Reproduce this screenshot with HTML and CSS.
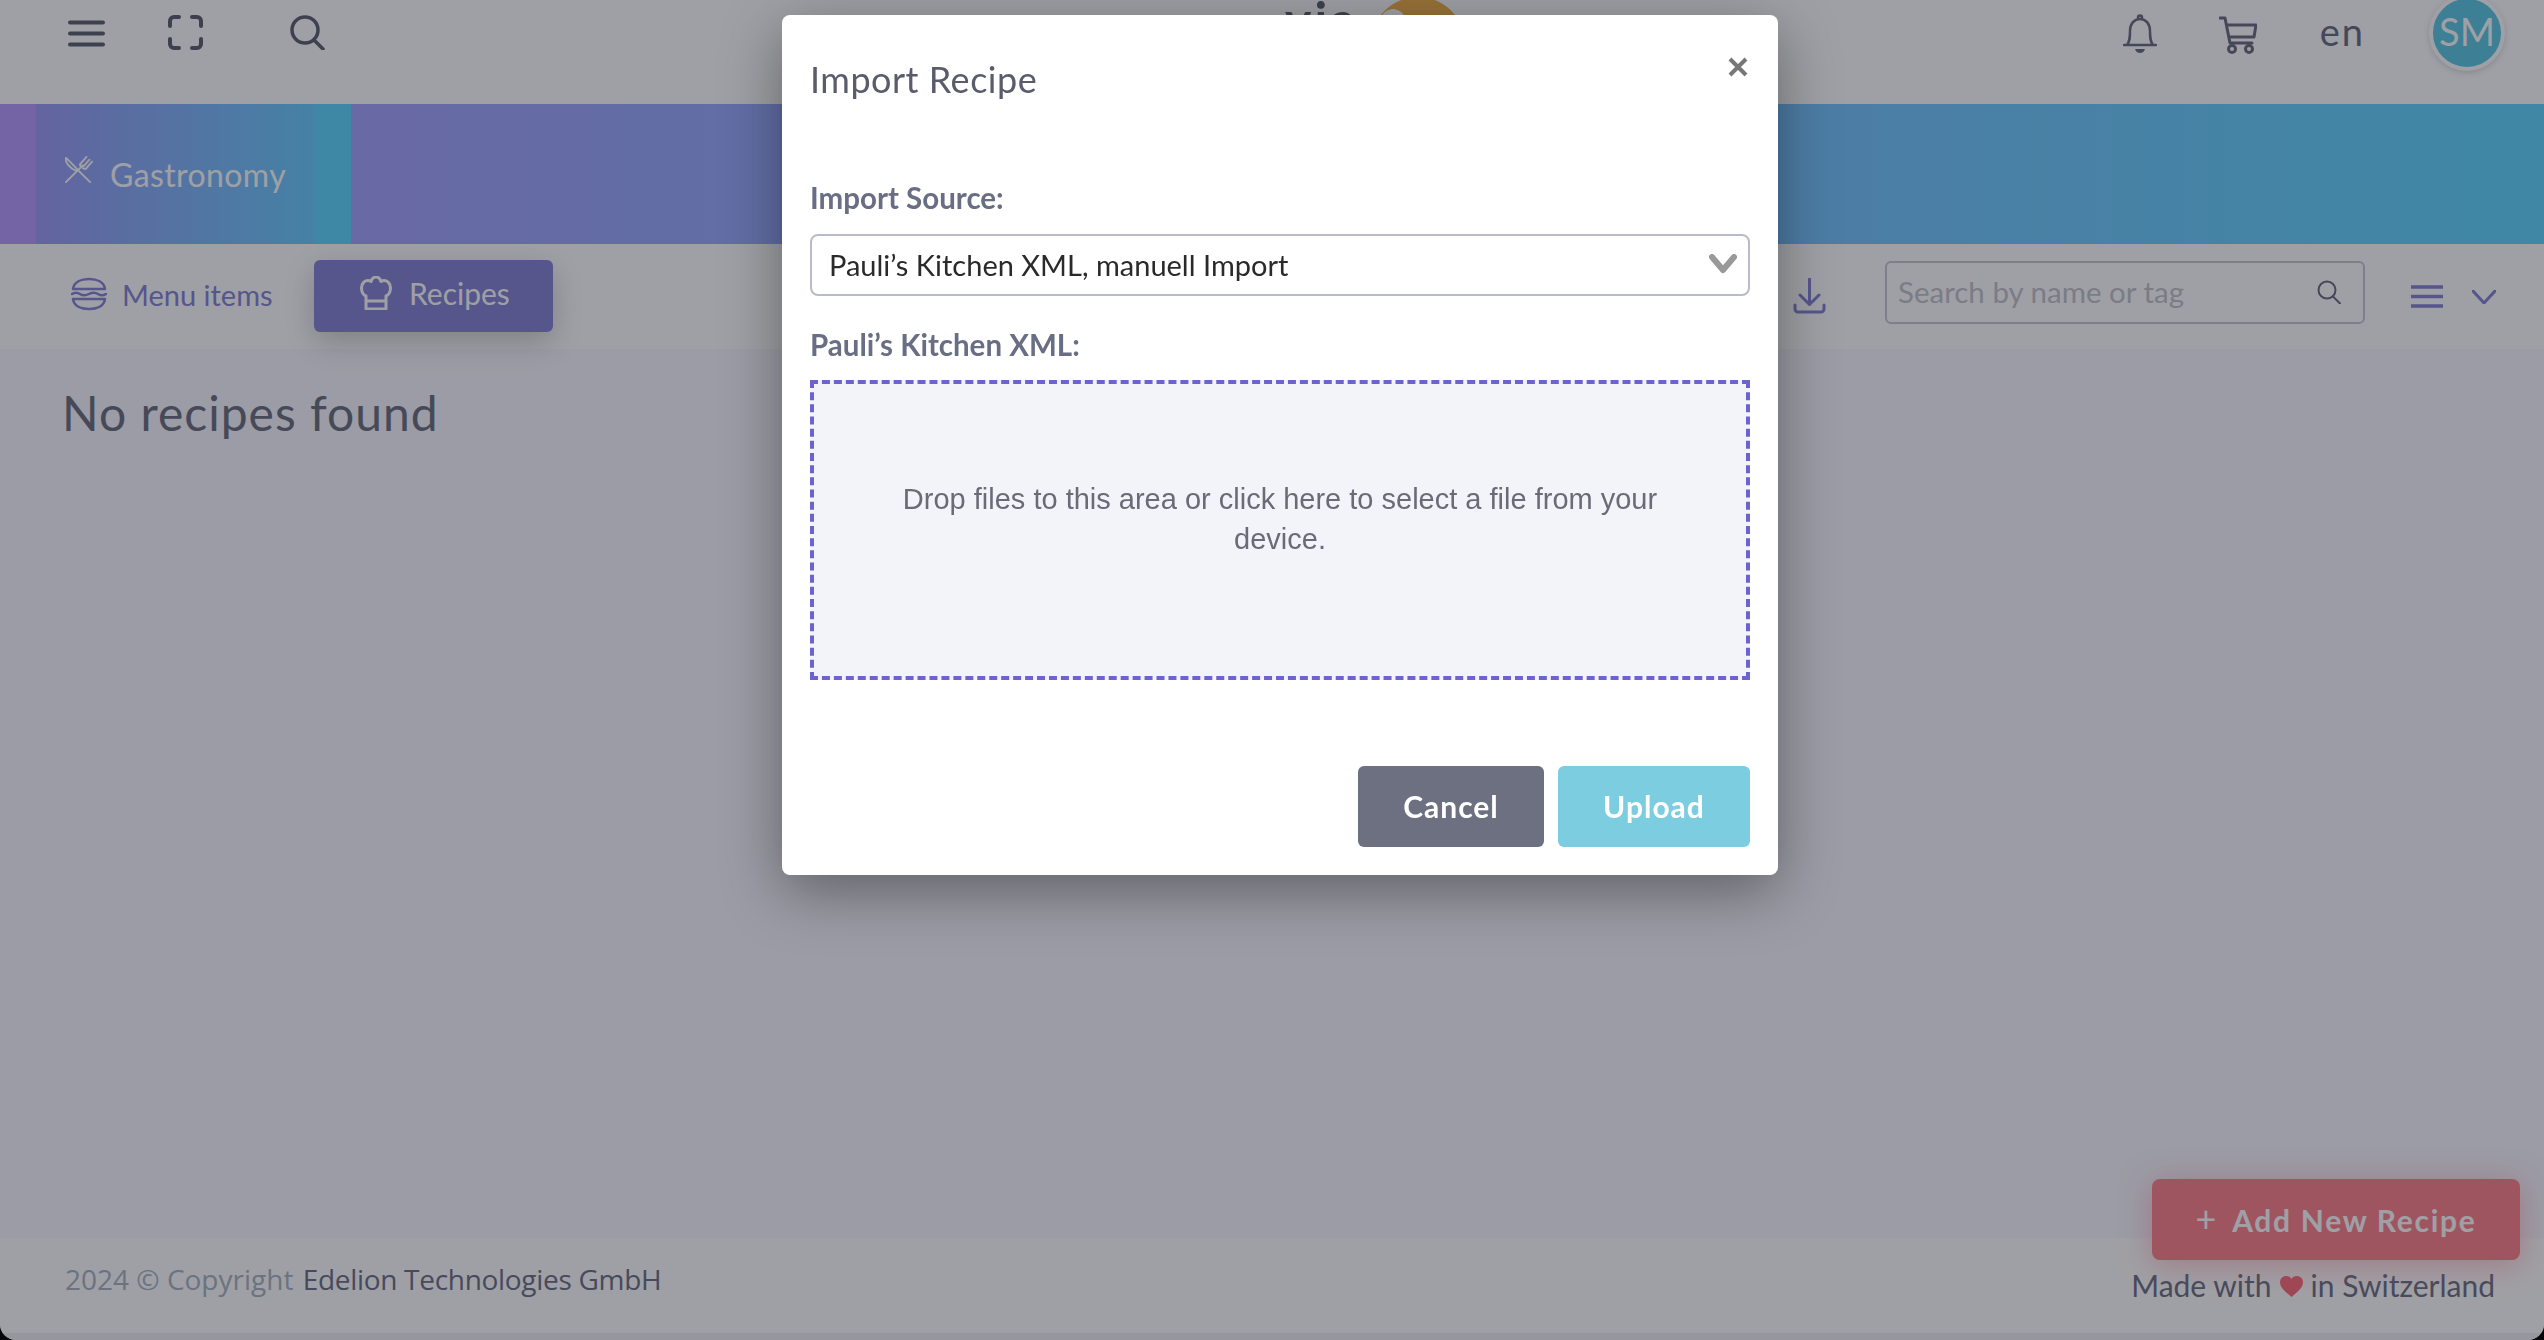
FILE: index.html
```html
<!DOCTYPE html>
<html lang="en">
<head>
  <meta charset="UTF-8">
  <title>Recipes</title>
  <link rel="stylesheet" href="styles.css">
</head>
<body>
  <div class="app">
    <header class="topbar">
      <div class="topbar-left">
        <svg class="icon-menu" viewBox="0 0 37 27"><path d="M2 2.500h33M2 13.500h33M2 24.500h33"/></svg>
        <svg class="icon-full" viewBox="0 0 35 35"><path d="M11 2H6a4 4 0 0 0-4 4v5M24 2h5a4 4 0 0 1 4 4v5M11 33H6a4 4 0 0 1-4-4v-5M24 33h5a4 4 0 0 0 4-4v-5"/></svg>
        <svg class="icon-search" viewBox="0 0 35 35"><circle cx="15" cy="15" r="13"/><path d="M24 25l9 9"/></svg>
      </div>
      <div class="logo">
        <span class="logo-text">via</span>
        <span class="logo-dot"></span>
      </div>
      <div class="topbar-right">
        <svg class="icon-bell" viewBox="0 0 34 40"><path d="M1 31h32M4 31c3-4 3-8 3-14 0-7 4-12 10-12s10 5 10 12c0 6 0 10 3 14M15 3.500a2 2 0 0 1 4 0"/><path class="solid" d="M12 35h10c-1 3-3 4-5 4s-4-1-5-4z"/></svg>
        <svg class="icon-cart" viewBox="0 0 38 38"><path d="M1 2h5l5 25h22M8 9h29l-2 12H10"/><circle cx="13" cy="33" r="3.500"/><circle cx="30" cy="33" r="3.500"/></svg>
        <span class="lang">en</span>
        <div class="avatar">SM</div>
      </div>
    </header>

    <div class="banner">
      <div class="banner-tab">
        <div class="banner-tab-inner">
          <svg class="icon-cutlery" viewBox="0 0 30 30"><path d="M1 2c5 4 11 12 26 26M1 2c-1 5 4 11 11 14M1 28L19 10M17 12l-1-3 7-8M19 13l3 1 7-8M20 11l6-7"/></svg>
          <span>Gastronomy</span>
        </div>
      </div>
    </div>

    <nav class="subnav">
      <div class="tabs">
        <a class="tab">
          <svg class="icon-burger" viewBox="0 0 36 34"><path d="M2 12C3 5 10 2 18 2s15 3 16 10zM2 22h32c-1 7-8 10-16 10S3 29 2 22zM1 17c3-2 5-2 8 0s5 2 9 0 6-2 9 0 5 2 8 0"/></svg>
          Menu items
        </a>
        <a class="tab tab-active">
          <svg class="icon-hat" viewBox="0 0 32 34"><path d="M6 33V20C3 19 1.500 15 1.500 12 1.500 7 5 4.500 8 4.500c1 0 2 .5 3 1 1-3 3-4.500 5-4.500s4 1.500 5 4.500c1-.5 2-1 3-1 3 0 6.500 2.500 6.500 7.500 0 3-1.500 7-4.500 8v13zM6 25h20"/></svg>
          Recipes
        </a>
      </div>
      <div class="tools">
        <svg class="icon-download" viewBox="0 0 33 36"><path d="M16.500 1v25M7 17l9.500 9.500L26 17M2 27v4a3 3 0 0 0 3 3h23a3 3 0 0 0 3-3v-4"/></svg>
        <div class="search">
          <input class="search-input" type="text" placeholder="Search by name or tag">
          <svg class="icon-search-small" viewBox="0 0 24 24"><circle cx="10" cy="10" r="8.500"/><path d="M16 16.500l7 7"/></svg>
        </div>
        <svg class="icon-list" viewBox="0 0 32 23"><path d="M0 2h32M0 11.500h32M0 21h32"/></svg>
        <svg class="icon-chevron" viewBox="0 0 24 14"><path d="M1 1l11 12L23 1"/></svg>
      </div>
    </nav>

    <main class="content">
      <h1 class="empty-title">No recipes found</h1>
    </main>

    <footer class="footer">
      <p class="copyright">2024 © Copyright <span class="company">Edelion Technologies GmbH</span></p>
      <p class="made-with">Made with <svg class="heart" viewBox="0 0 24 22"><path d="M12 22C5 16 0 12 0 6.500 0 2.500 3 0 6.500 0 9 0 11 1.200 12 3.200 13 1.200 15 0 17.500 0 21 0 24 2.500 24 6.500 24 12 19 16 12 22z"/></svg> in Switzerland</p>
    </footer>
    <div class="footer-strip"></div>

    <button class="add-button"><span class="add-plus">+</span>Add New Recipe</button>
  </div>

  <div class="backdrop">
    <div class="modal">
      <div class="modal-header">
        <h2 class="modal-title">Import Recipe</h2>
        <svg class="icon-close" viewBox="0 0 20 20"><path d="M2 2l16 16M18 2L2 18"/></svg>
      </div>
      <label class="field-label">Import Source:</label>
      <div class="select">
        <span>Pauli’s Kitchen XML, manuell Import</span>
        <svg class="icon-select" viewBox="0 0 28 20"><path d="M3 3l11 13L25 3"/></svg>
      </div>
      <label class="field-label">Pauli’s Kitchen XML:</label>
      <div class="dropzone">
        <p>Drop files to this area or click here to select a file from your device.</p>
      </div>
      <div class="modal-footer">
        <button class="btn btn-cancel">Cancel</button>
        <button class="btn btn-upload">Upload</button>
      </div>
    </div>
  </div>
</body>
</html>
```

FILE: styles.css
```css
* {
  box-sizing: border-box;
}
html, body {
  margin: 0;
  height: 100%;
  overflow: hidden;
}
body {
  background: #000;
  font-family: 'Lato', 'Liberation Sans', sans-serif;
  color: #5a5c6c;
}
svg {
  fill: none;
  stroke: currentColor;
  stroke-linecap: round;
  stroke-linejoin: round;
  flex: none;
}
.app {
  height: 1340px;
  display: flex;
  flex-direction: column;
  background: #f9f8ff;
  border-radius: 0 0 16px 16px;
  overflow: hidden;
  color: #6a6d80;
}
.backdrop {
  position: fixed;
  inset: 0;
  background: rgba(16, 18, 30, 0.4);
  padding: 15px 0 0 782px;
}

/* top bar */
.topbar {
  height: 104px;
  background: #fff;
  display: flex;
  padding: 0 39px 0 68px;
  flex: none;
  position: relative;
}
.topbar-left {
  display: flex;
  align-items: flex-start;
  padding-top: 15px;
  color: #5d606f;
}
.icon-menu {
  width: 37px;
  height: 27px;
  margin-top: 5px;
  stroke-width: 4;
}
.icon-full {
  width: 35px;
  height: 35px;
  margin-left: 63px;
  stroke-width: 4;
}
.icon-search {
  width: 35px;
  height: 35px;
  margin-left: 87px;
  stroke-width: 3.500;
}
.logo {
  display: flex;
  margin-left: 960px;
  height: 15px;
  overflow: hidden;
}
.logo-text {
  font-size: 50px;
  font-weight: 700;
  line-height: 40px;
  margin-top: -1px;
  width: 86px;
  letter-spacing: 3px;
  color: #5d606f;
}
.logo-dot {
  width: 94px;
  height: 94px;
  border-radius: 50%;
  background: radial-gradient(circle 13px at 22px 25px, #fff 97%, transparent), #f2b24a;
  margin-top: -3px;
}
.topbar-right {
  margin-left: auto;
  display: flex;
  align-items: flex-start;
  color: #6a6d80;
}
.icon-bell {
  width: 34px;
  height: 40px;
  margin: 14px 3px 0 0;
  stroke-width: 2.500;
}
.icon-bell .solid {
  fill: currentColor;
  stroke: none;
}
.icon-cart {
  width: 38px;
  height: 38px;
  margin: 16px 1px 0 59px;
  stroke-width: 3;
}
.lang {
  font-size: 38px;
  line-height: 40px;
  margin: 11px 0 0 62px;
  letter-spacing: 2px;
}
.avatar {
  width: 76px;
  height: 76px;
  margin: -5px 0 0 64px;
  padding-bottom: 4px;
  border-radius: 50%;
  border: 4px solid #fff;
  background: #5dc8e4;
  color: #fff;
  font-size: 38px;
  display: flex;
  align-items: center;
  justify-content: center;
  box-shadow: 0 2px 6px rgba(0, 0, 0, 0.15);
}

/* banner */
.banner {
  height: 140px;
  flex: none;
  background: linear-gradient(90deg, #b09bff, #60d7ff);
}
.banner-tab {
  width: 351px;
  height: 100%;
  padding: 0 36px;
  background: linear-gradient(90deg, #b79bff 50%, #60d7ff 50%);
}
.banner-tab-inner {
  height: 100%;
  display: flex;
  align-items: center;
  gap: 17px;
  padding: 0 0 0 29px;
  color: #fff;
  font-size: 32px;
  letter-spacing: 0.4px;
  background: linear-gradient(90deg, #9c9bf7, #6acdff);
}
.icon-cutlery {
  width: 28px;
  height: 28px;
  margin-top: -8px;
  stroke-width: 2;
}

/* tabs row */
.subnav {
  height: 105px;
  flex: none;
  background: #fff;
  display: flex;
  align-items: center;
  justify-content: space-between;
  padding: 0 48px 0 0;
}
.tabs {
  display: flex;
  align-items: center;
}
.tab {
  display: flex;
  align-items: center;
  color: #8583d6;
  font-size: 29px;
  padding-bottom: 5px;
}
.tab:first-child {
  padding-left: 71px;
  width: 314px;
  gap: 15px;
}
.tab-active {
  width: 239px;
  height: 72px;
  gap: 17px;
  padding-left: 46px;
  margin-top: -2px;
  font-size: 30px;
  background: #8583d6;
  color: #fff;
  border-radius: 6px;
  box-shadow: 0 10px 30px rgba(0, 0, 0, 0.2);
}
.icon-burger {
  width: 36px;
  height: 34px;
  stroke-width: 2.500;
}
.icon-hat {
  width: 32px;
  height: 34px;
  stroke-width: 3;
}
.tools {
  display: flex;
  align-items: center;
  color: #8583d6;
}
.icon-download {
  width: 33px;
  height: 36px;
  stroke-width: 3;
  margin: 0 59px 2px 0;
}
.search {
  width: 480px;
  height: 63px;
  display: flex;
  align-items: center;
  border: 2px solid #c8c8d4;
  border-radius: 6px;
  padding: 0 22px 2px 9px;
  margin-bottom: 8px;
  color: #6a6d80;
}
.search-input {
  flex: 1;
  min-width: 0;
  border: none;
  outline: none;
  background: none;
  font: 29.500px 'Lato', 'Liberation Sans', sans-serif;
  color: #6a6d80;
}
.search-input::placeholder {
  color: #c4c4cc;
  opacity: 1;
}
.icon-search-small {
  width: 24px;
  height: 24px;
  stroke-width: 2;
}
.icon-list {
  width: 32px;
  height: 23px;
  margin-left: 46px;
  stroke-width: 3.500;
  stroke-linecap: butt;
}
.icon-chevron {
  width: 24px;
  height: 14px;
  margin-left: 29px;
  stroke-width: 3;
}

/* content */
.content {
  flex: 1;
  padding: 34px 62px;
}
.empty-title {
  margin: 0;
  font-size: 48px;
  line-height: 60px;
  font-weight: 400;
  letter-spacing: 1px;
  color: #6c6e7e;
}
.footer {
  height: 95px;
  flex: none;
  background: #fff;
  display: flex;
  justify-content: space-between;
  padding: 0 49px 0 65px;
  font-family: 'Open Sans', 'Liberation Sans', sans-serif;
  font-size: 28px;
}
.copyright {
  margin: 22px 0 0;
  color: #a8b4c4;
}
.company {
  color: #6d7086;
  margin-left: 2px;
  letter-spacing: -0.3px;
}
.made-with {
  margin: 27px 0 0;
  display: flex;
  align-items: center;
  gap: 8px;
  height: 40px;
  font-family: 'Lato', 'Liberation Sans', sans-serif;
  font-size: 30px;
  color: #6d7086;
}
.heart {
  width: 23px;
  height: 21px;
  fill: #ff6b78;
  stroke: none;
  margin-top: 2px;
}
.footer-strip {
  height: 7px;
  flex: none;
  background: #f0f0f4;
}
.add-button {
  position: absolute;
  left: 2152px;
  top: 1179px;
  width: 368px;
  height: 81px;
  padding: 0 0 4px;
  border: none;
  border-radius: 8px;
  background: #ff828c;
  color: #fff;
  font: 700 30px 'Lato', 'Liberation Sans', sans-serif;
  letter-spacing: 1.700px;
  box-shadow: 0 4px 30px rgba(255, 130, 140, 0.5);
}
.add-plus {
  font-weight: 400;
  font-size: 36px;
  margin-right: 14px;
}

/* modal */
.modal {
  width: 996px;
  height: 860px;
  background: #fff;
  border-radius: 8px;
  padding: 0 28px 28px 28px;
  display: flex;
  flex-direction: column;
  box-shadow: 0 16px 60px rgba(0, 0, 0, 0.38);
}
.modal-header {
  display: flex;
  justify-content: space-between;
  height: 166px;
  flex: none;
}
.modal-title {
  margin: 42px 0 0;
  font-size: 36px;
  line-height: 44px;
  font-weight: 400;
  letter-spacing: 0.5px;
  color: #5a5c6c;
}
.icon-close {
  width: 20px;
  height: 20px;
  margin: 42px 2px 0 0;
  color: #777;
  stroke-width: 4;
  stroke-linecap: butt;
}
.field-label {
  display: block;
  font-size: 29.500px;
  line-height: 34px;
  font-weight: 700;
  color: #6a6e84;
}
.select {
  margin: 19px 0 32px;
  height: 62px;
  display: flex;
  align-items: center;
  justify-content: space-between;
  padding: 0 11px 2px 17px;
  border: 2px solid #b9bcc8;
  border-radius: 8px;
  font-size: 29px;
  color: #2a2a2a;
}
.icon-select {
  width: 28px;
  height: 20px;
  color: #999;
  stroke-width: 6;
}
.dropzone {
  margin-top: 18px;
  height: 300px;
  background: #f3f4fa;
  border: 4px dashed #6c63d0;
  display: flex;
  align-items: center;
  justify-content: center;
  padding: 0 60px;
}
.dropzone p {
  margin: 0 0 22px;
  text-align: center;
  font-family: 'Liberation Sans', Arial, sans-serif;
  font-size: 29px;
  line-height: 40px;
  color: #6b6b78;
}
.modal-footer {
  margin-top: auto;
  display: flex;
  justify-content: flex-end;
  gap: 14px;
}
.btn {
  height: 81px;
  padding: 0 0 2px;
  border: none;
  border-radius: 6px;
  color: #fff;
  font: 700 30px 'Lato', 'Liberation Sans', sans-serif;
  letter-spacing: 1px;
}
.btn-cancel {
  width: 186px;
  background: #6c7080;
}
.btn-upload {
  width: 192px;
  background: #7ccde0;
}
```
